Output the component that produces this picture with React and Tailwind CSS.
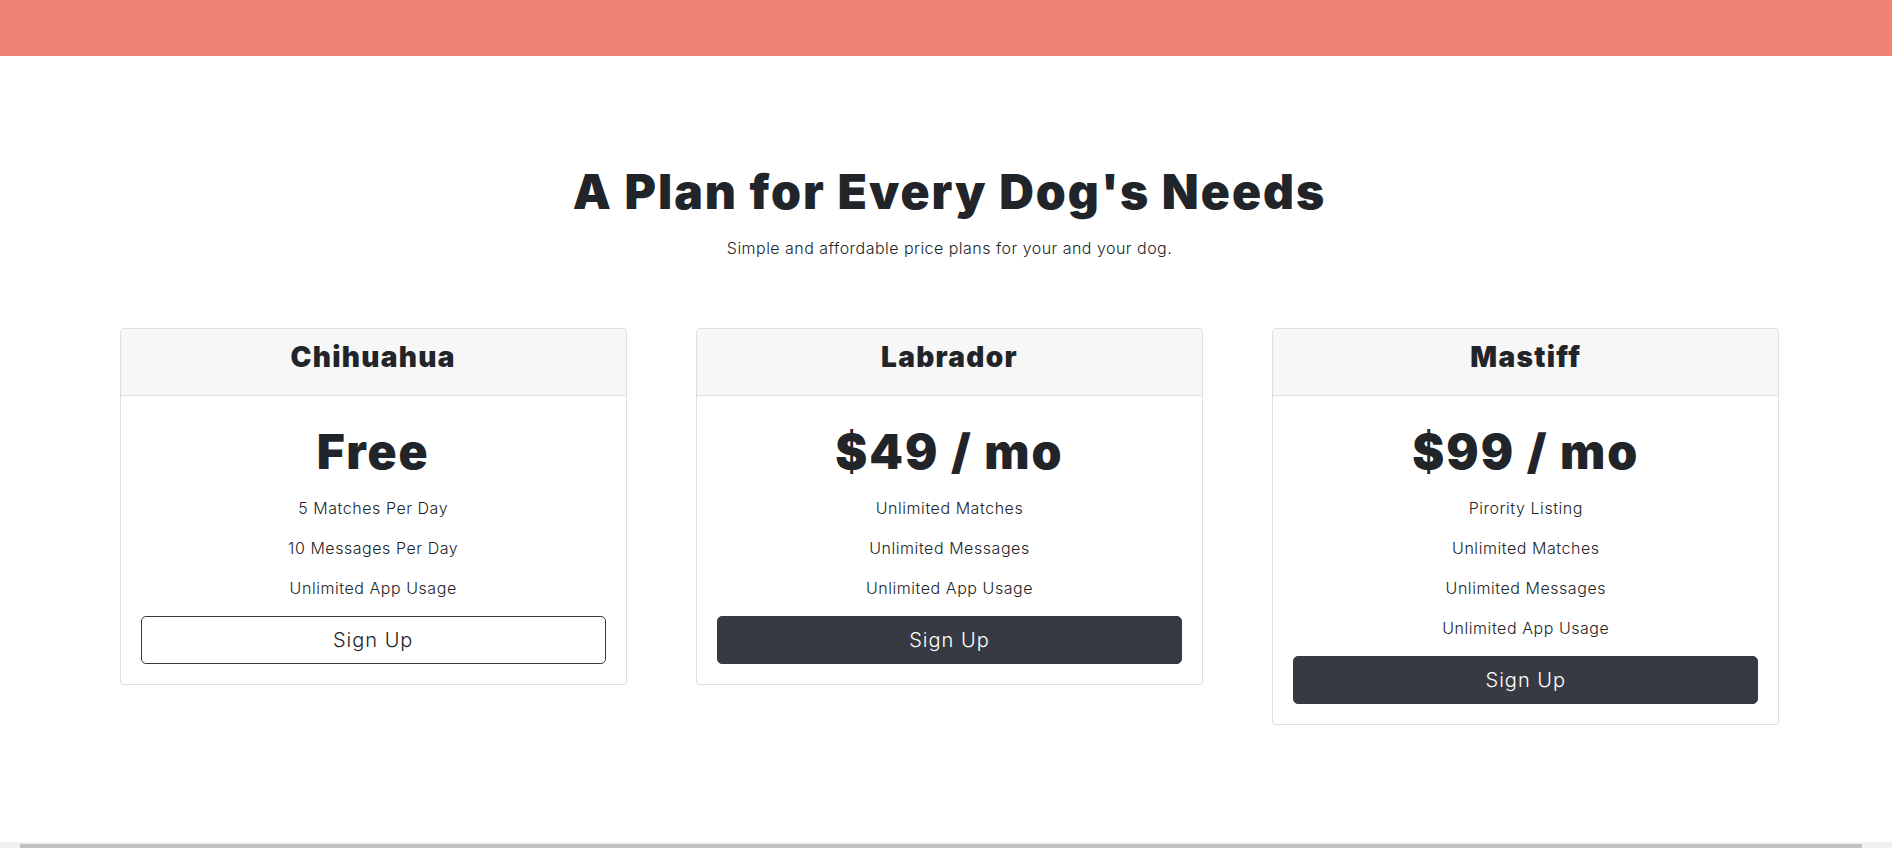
import React from 'react';

const plans = [
  {
    name: 'Chihuahua',
    price: 'Free',
    features: ['5 Matches Per Day', '10 Messages Per Day', 'Unlimited App Usage'],
    outline: true,
  },
  {
    name: 'Labrador',
    price: '$49 / mo',
    features: ['Unlimited Matches', 'Unlimited Messages', 'Unlimited App Usage'],
  },
  {
    name: 'Mastiff',
    price: '$99 / mo',
    features: ['Pirority Listing', 'Unlimited Matches', 'Unlimited Messages', 'Unlimited App Usage'],
  },
];

const PlanCard = ({ plan }) => {
  return (
    <div className="w-1/3 px-[34.5px] py-[52px]">
      <div className="border border-[#dfdfdf] rounded-[4px] text-center bg-white">
        <div className="bg-[#f7f7f7] border-b border-[#dfdfdf] px-5 py-3 rounded-t-[4px]">
          <h3 className="text-[28px] leading-[33.6px] mb-2 font-black tracking-[1.3px] text-[#212529]">{plan.name}</h3>
        </div>
        <div className="p-5">
          <h2 className="text-[48px] leading-[72px] mb-2 font-black tracking-[2px] text-[#212529]">{plan.price}</h2>
          {plan.features.map((f) => (
            <p key={f} className="text-base leading-6 mb-4 font-light tracking-[0.55px] text-[#212529]">{f}</p>
          ))}
          {plan.outline ? (
            <button className="w-full h-12 rounded-[5px] border border-[#343a40] text-[#212529] text-xl font-light tracking-[1px]">
              Sign Up
            </button>
          ) : (
            <button className="w-full h-12 rounded-[5px] border border-[#343a40] bg-[#373a42] text-white text-xl font-light tracking-[1px]">
              Sign Up
            </button>
          )}
        </div>
      </div>
    </div>
  );
};

export default function App() {
  return (
    <div className="h-[848px] w-[1892px] overflow-hidden flex flex-col bg-white" style={{ fontFamily: 'Inter, "Noto Sans", sans-serif' }}>
      <div className="w-[1899px] flex-1 overflow-hidden">
        <div className="h-14 bg-[#f08273]"></div>
        <section className="px-[100px] py-[100px] text-center">
          <h2 className="text-[48px] leading-[72px] mb-2 font-black tracking-[2px] text-[#212529]">A Plan for Every Dog's Needs</h2>
          <p className="text-base leading-6 mb-4 font-light tracking-[0.47px] text-[#212529]">Simple and affordable price plans for your and your dog.</p>
          <div className="flex -mx-[15px]">
            {plans.map((p) => (
              <PlanCard key={p.name} plan={p} />
            ))}
          </div>
        </section>
      </div>
      <div className="h-[6px] bg-[#f1f1f1] flex items-end pl-[20px] pr-[30px]">
        <div className="h-[4px] w-full bg-[#c1c1c1]"></div>
      </div>
    </div>
  );
}
